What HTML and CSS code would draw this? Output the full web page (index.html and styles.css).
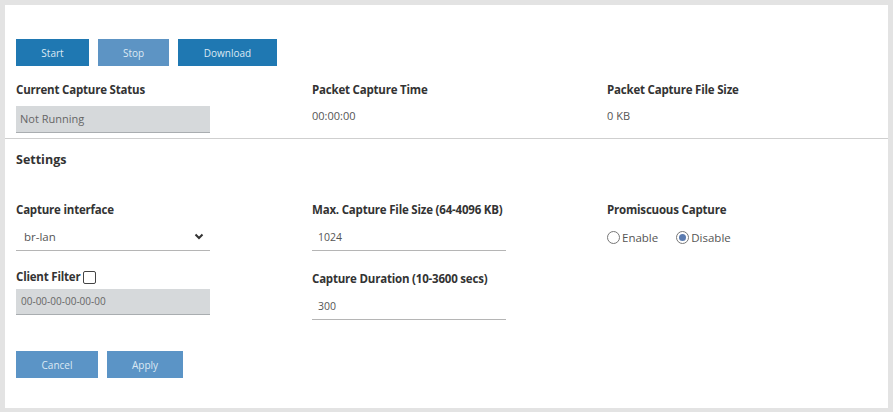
FILE: index.html
```html
<!DOCTYPE html>
<html>
<head>
<meta charset="utf-8">
<link rel="stylesheet" href="styles.css">
</head>
<body>
<div class="frame">
  <div class="actions">
    <button class="btn btn-start">Start</button>
    <button class="btn btn-stop">Stop</button>
    <button class="btn btn-download">Download</button>
  </div>
  <div class="status">
    <div class="col">
      <div class="label">Current Capture Status</div>
      <div class="status-box">Not Running</div>
    </div>
    <div class="col">
      <div class="label">Packet Capture Time</div>
      <div class="value">00:00:00</div>
    </div>
    <div class="col">
      <div class="label">Packet Capture File Size</div>
      <div class="value">0 KB</div>
    </div>
  </div>
  <div class="settings">
    <div class="heading">Settings</div>
    <div class="grid">
      <div class="col">
        <div class="label lbl-first">Capture interface</div>
        <div class="select">
          <span>br-lan</span>
          <svg class="chev" width="10" height="7" viewBox="0 0 10 7"><path d="M1.5 1.5 L5 5 L8.5 1.5" fill="none" stroke="#333" stroke-width="2"/></svg>
        </div>
        <div class="label lbl-second">Client Filter <span class="checkbox"></span></div>
        <div class="filter-box">00-00-00-00-00-00</div>
      </div>
      <div class="col">
        <div class="label lbl-first">Max. Capture File Size (64-4096 KB)</div>
        <div class="input">1024</div>
        <div class="label lbl-second lbl-shift">Capture Duration (10-3600 secs)</div>
        <div class="input">300</div>
      </div>
      <div class="col">
        <div class="label lbl-first">Promiscuous Capture</div>
        <div class="radios">
          <span class="radio"><span class="dot"></span>Enable</span>
          <span class="radio checked"><span class="dot"></span>Disable</span>
        </div>
      </div>
    </div>
    <div class="footer">
      <button class="btn btn-cancel">Cancel</button>
      <button class="btn btn-apply">Apply</button>
    </div>
  </div>
</div>
</body>
</html>
```

FILE: styles.css
```css
* { box-sizing: border-box; }
html, body { margin: 0; padding: 0; background: #fff; }
body { font-family: "Open Sans", "Liberation Sans", sans-serif; color: #333; }

.frame {
  width: 893px;
  height: 412px;
  border: 5px solid #e3e3e3;
  border-bottom-width: 4px;
  background: #fff;
}

.actions {
  display: flex;
  gap: 9px;
  padding: 34px 11px 0;
}

.btn {
  height: 27px;
  border: none;
  color: #dce9f4;
  font-family: "Open Sans", "Liberation Sans", sans-serif;
  font-size: 10px;
  padding: 0;
  cursor: pointer;
}
.btn-start { width: 73px; background: #1f78b2; }
.btn-stop { width: 71px; background: #5d94c4; }
.btn-download { width: 99px; background: #1f78b2; }
.btn-cancel { width: 82px; background: #5b94c6; }
.btn-apply { width: 76px; background: #5b94c6; }

.status {
  display: grid;
  grid-template-columns: 296px 295px 1fr;
  margin-top: 15px;
  padding: 0 0 5px 11px;
  border-bottom: 1px solid #cfcfcf;
}

.label {
  font-size: 11.5px;
  font-weight: 700;
  line-height: 18px;
  color: #333;
  white-space: nowrap;
  letter-spacing: -0.2px;
}

.status-box {
  margin-top: 7px;
  width: 194px;
  height: 27px;
  background: #d6d9db;
  border-bottom: 1px solid #a9adb0;
  font-size: 11px;
  line-height: 25px;
  padding-left: 4px;
  color: #666;
}

.value {
  margin-top: 8px;
  font-size: 11px;
  line-height: 18px;
  color: #555;
}

.settings {
  padding-left: 11px;
}

.heading {
  margin-top: 11px;
  font-size: 12.5px;
  font-weight: 700;
  line-height: 20px;
  color: #333;
}

.grid {
  display: grid;
  grid-template-columns: 296px 295px 1fr;
}

.col { display: flex; flex-direction: column; align-items: flex-start; }

.lbl-first { margin-top: 31px; }
.lbl-second { margin-top: 17px; display: flex; align-items: center; gap: 3px; }
.lbl-shift { margin-top: 19px; }

.select {
  margin-top: 4px;
  width: 194px;
  height: 28px;
  border-bottom: 1px solid #b5b5b5;
  display: flex;
  align-items: center;
  justify-content: space-between;
  padding: 0 6px 0 8px;
  font-size: 11.5px;
  color: #555;
}

.chev { display: block; }

.checkbox {
  display: inline-block;
  width: 13px;
  height: 13px;
  border: 1.5px solid #444;
  border-radius: 2px;
  background: #fff;
}

.filter-box {
  margin-top: 3px;
  width: 194px;
  height: 26px;
  background: #d6d9db;
  border-bottom: 1px solid #a9adb0;
  font-size: 10px;
  line-height: 25px;
  padding-left: 5px;
  color: #666;
}

.input {
  margin-top: 4px;
  width: 194px;
  height: 28px;
  border-bottom: 1px solid #b5b5b5;
  display: flex;
  align-items: center;
  padding-left: 6px;
  font-size: 10.5px;
  color: #555;
}

.radios {
  margin-top: 4px;
  height: 28px;
  display: flex;
  align-items: center;
  gap: 18px;
  font-size: 11.5px;
  color: #555;
}

.radio { display: inline-flex; align-items: center; gap: 2px; }

.dot {
  width: 13px;
  height: 13px;
  border: 1px solid #777;
  border-radius: 50%;
  display: inline-flex;
  align-items: center;
  justify-content: center;
}
.radio.checked .dot::after {
  content: "";
  width: 7px;
  height: 7px;
  border-radius: 50%;
  background: #5b7bb0;
}

.footer {
  display: flex;
  gap: 9px;
  margin-top: 31px;
}
```
